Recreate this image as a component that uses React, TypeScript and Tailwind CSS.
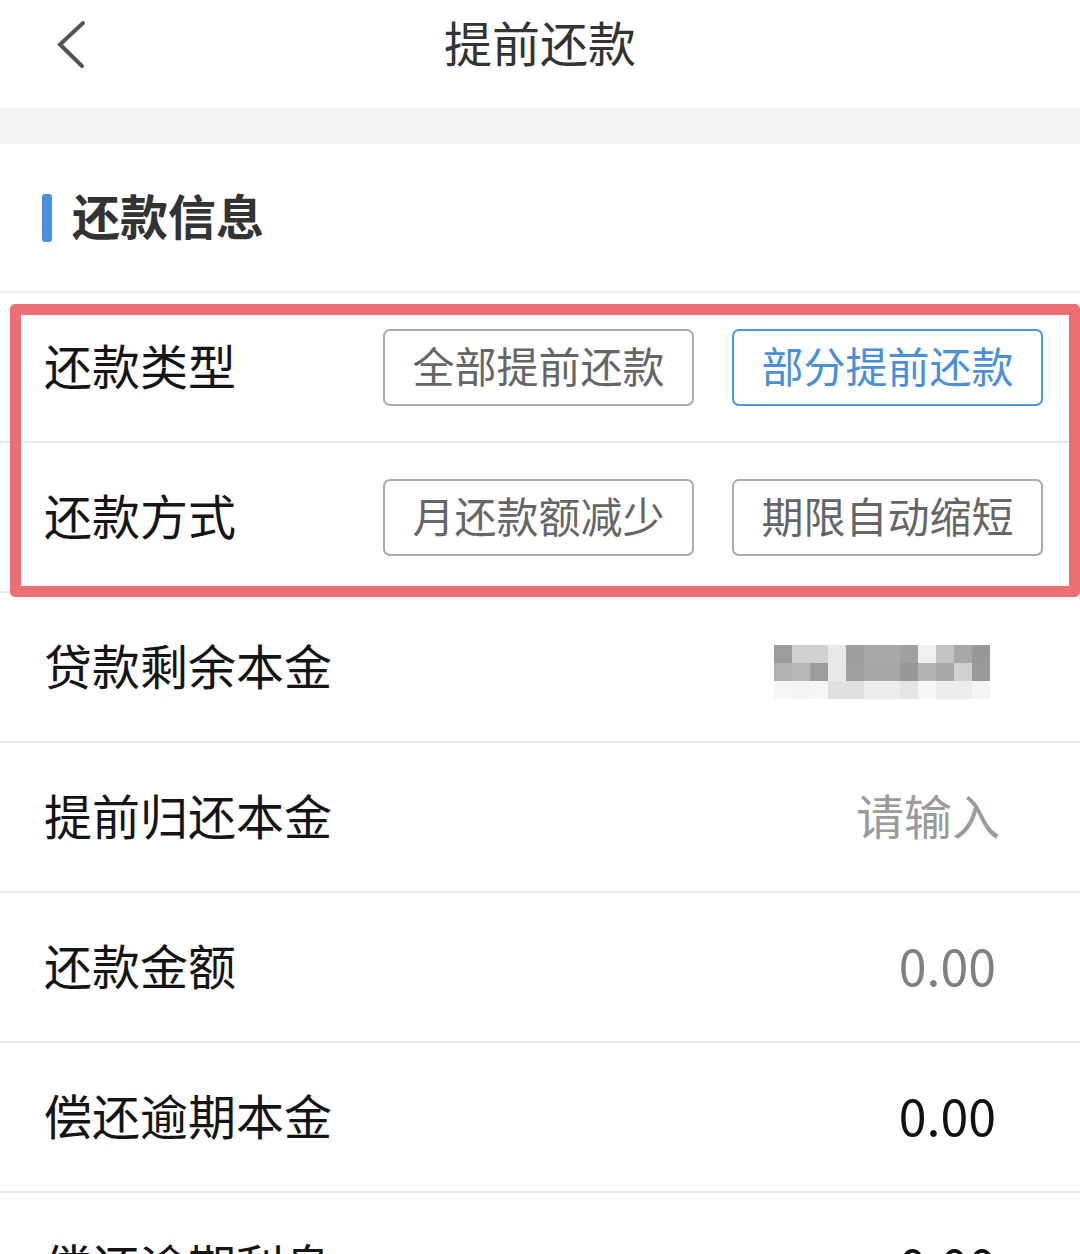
import React from "react";

const FONT = { fontFamily: '"Noto Sans CJK SC", "Noto Sans", sans-serif' };

const mosaic: string[][] = [
  ["#9c9c9c", "#d0d0d0", "#d0d0d0", "#e8e8e8", "#9e9e9e", "#a8a8a8", "#a8a8a8", "#a0a0a0", "#f0f0f0", "#c4c4c4", "#a8a8a8", "#989898"],
  ["#b0b0b0", "#b8b8b8", "#9c9c9c", "#e8e8e8", "#a0a0a0", "#a6a6a6", "#a6a6a6", "#989898", "#b4b4b4", "#a8a8a8", "#d0d0d0", "#9a9a9a"],
  ["#f6f6f6", "#f4f4f4", "#f6f6f6", "#e0e0e0", "#e0e0e0", "#ececec", "#ececec", "#e4e4e4", "#f6f6f6", "#ececec", "#ececec", "#f4f4f4"],
];

function Row({ label, children }: { label: string; children: React.ReactNode }) {
  return (
    <div className="flex h-[150px] items-center justify-between border-b-2 border-[#e8e8e8] pl-[44px] pr-[84px]">
      <span className="-translate-y-[3px] text-[48px] leading-none text-[#151515]">{label}</span>
      {children}
    </div>
  );
}

function Btn({ text, active }: { text: string; active?: boolean }) {
  return (
    <div
      className={
        "flex h-[77px] w-[311px] items-center justify-center rounded-[7px] border-2 text-[42px] leading-none " +
        (active ? "border-[#4a98e0] text-[#4a8fd8]" : "border-[#ababab] text-[#666666]")
      }
    >
      <span className="-translate-y-[2px]">{text}</span>
    </div>
  );
}

export default function App() {
  return (
    <div className="relative h-[1254px] w-[1080px] overflow-hidden bg-white" style={FONT}>
      {/* Header */}
      <div className="relative flex h-[108px] items-start justify-center pt-[17px]">
        <svg className="absolute left-[50px] top-[14px]" width="44" height="60" viewBox="50 14 44 60">
          <polyline points="83,23 60,44.5 82,66" fill="none" stroke="#555" strokeWidth="4" strokeLinecap="round" strokeLinejoin="miter" />
        </svg>
        <span className="text-[48px] leading-none text-[#333333]">提前还款</span>
      </div>
      <div className="h-[36px] bg-[#f2f2f2]" />

      {/* Section header */}
      <div className="flex h-[149px] items-center border-b-2 border-[#ececec] pl-[42px]">
        <div className="h-[48px] w-[10px] rounded-[3px] bg-[#4a90e2]" />
        <span className="ml-[20px] -translate-y-[4px] text-[48px] font-bold leading-none text-[#333333]">还款信息</span>
      </div>

      {/* Type row */}
      <div className="flex h-[150px] items-center border-b-2 border-[#e8e8e8] pl-[44px] pr-[37px]">
        <span className="-translate-y-[3px] text-[48px] leading-none text-[#151515]">还款类型</span>
        <div className="ml-auto flex gap-[38px]">
          <Btn text="全部提前还款" />
          <Btn text="部分提前还款" active />
        </div>
      </div>
      <div className="flex h-[150px] items-center border-b-2 border-[#e8e8e8] pl-[44px] pr-[37px]">
        <span className="-translate-y-[3px] text-[48px] leading-none text-[#151515]">还款方式</span>
        <div className="ml-auto flex gap-[38px]">
          <Btn text="月还款额减少" />
          <Btn text="期限自动缩短" />
        </div>
      </div>

      <Row label="贷款剩余本金">
        <div className="mr-[6px] mt-[10px] flex flex-col">
          {mosaic.map((r, i) => (
            <div key={i} className="flex">
              {r.map((c, j) => (
                <div key={j} className="h-[18px] w-[18px]" style={{ backgroundColor: c }} />
              ))}
            </div>
          ))}
        </div>
      </Row>
      <Row label="提前归还本金">
        <span className="-mr-[4px] -translate-y-[3px] text-[48px] leading-none text-[#9b9b9b]">请输入</span>
      </Row>
      <Row label="还款金额">
        <span className="-translate-y-[3px] text-[50px] leading-none text-[#808080]">0.00</span>
      </Row>
      <Row label="偿还逾期本金">
        <span className="-translate-y-[3px] text-[50px] leading-none text-[#111111]">0.00</span>
      </Row>
      <Row label="偿还逾期利息">
        <span className="-translate-y-[3px] text-[50px] leading-none text-[#111111]">0.00</span>
      </Row>

      {/* Red annotation overlay */}
      <div className="pointer-events-none absolute left-[10px] top-[304px] h-[293px] w-[1070px] rounded-[5px] border-[11px] border-[#ec6f74]" />
    </div>
  );
}
